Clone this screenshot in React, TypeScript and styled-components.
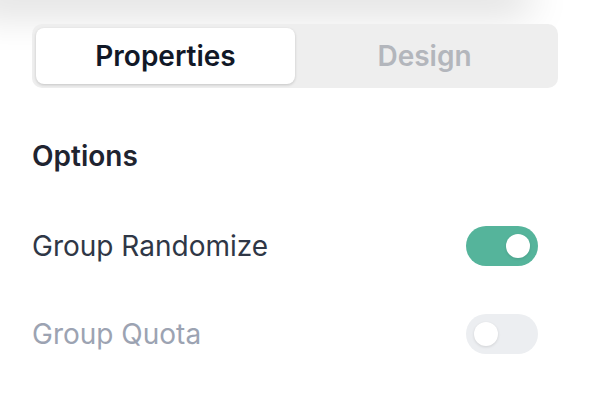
import { useState } from 'react'
import { styled, createGlobalStyle } from 'styled-components'

const GlobalStyle = createGlobalStyle`
	html, body {
		margin: 0;
		padding: 0;
		background: #ffffff;
		font-family: Inter, "Noto Sans", sans-serif;
		-webkit-font-smoothing: antialiased;
	}
`

const StyledPanel = styled.aside`
	width: 590px;
	height: 414px;
	overflow: hidden;
	background: #ffffff;
`
const StyledHeaderShade = styled.div`
	width: 560px;
	height: 30px;
	margin-top: -30px;
	margin-left: -30px;
	background: #ffffff;
	box-shadow: 0 12px 40px rgba(0, 0, 0, 0.16);
`
const StyledContent = styled.div`
	display: flex;
	flex-direction: column;
	padding: 24px 32px 0 32px;
`
const StyledTabs = styled.div`
	display: grid;
	grid-template-columns: 1fr 1fr;
	width: 526px;
	height: 64px;
	padding: 4px;
	box-sizing: border-box;
	background: #eeeeee;
	border-radius: 10px;
`
const StyledTab = styled.button<{ $active: boolean }>`
	border: none;
	border-radius: 8px;
	font-family: Inter, sans-serif;
	font-size: 28px;
	font-weight: 600;
	cursor: pointer;
	background: ${(p) => (p.$active ? '#ffffff' : 'transparent')};
	color: ${(p) => (p.$active ? '#111827' : '#b3b6bc')};
	box-shadow: ${(p) => (p.$active ? '0 1px 3px rgba(0, 0, 0, 0.18)' : 'none')};
`
const StyledHeading = styled.h3`
	margin: 48px 0 0 0;
	height: 40px;
	line-height: 40px;
	font-size: 28px;
	font-weight: 600;
	color: #1f2430;
`
const StyledRow = styled.label<{ $disabled?: boolean }>`
	display: flex;
	align-items: center;
	justify-content: space-between;
	width: 506px;
	height: 40px;
	margin-top: ${(p) => (p.$disabled ? '48px' : '50px')};
	font-size: 28px;
	font-weight: 400;
	color: ${(p) => (p.$disabled ? '#9ca3b2' : '#2f3746')};
`
const StyledTrack = styled.span<{ $on: boolean }>`
	display: flex;
	align-items: center;
	justify-content: ${(p) => (p.$on ? 'flex-end' : 'flex-start')};
	width: 72px;
	height: 40px;
	padding: 0 8px;
	box-sizing: border-box;
	border-radius: 20px;
	background: ${(p) => (p.$on ? '#55b49b' : '#eceef1')};
`
const StyledKnob = styled.span`
	width: 24px;
	height: 24px;
	border-radius: 50%;
	background: #ffffff;
	box-shadow: 0 1px 3px rgba(0, 0, 0, 0.12);
`

function Toggle({ on }: { on: boolean }) {
	return (
		<StyledTrack $on={on}>
			<StyledKnob />
		</StyledTrack>
	)
}

export default function App() {
	const [tab, setTab] = useState<'properties' | 'design'>('properties')

	return (
		<StyledPanel>
			<GlobalStyle />
			<StyledHeaderShade />
			<StyledContent>
				<StyledTabs>
					<StyledTab $active={tab === 'properties'} onClick={() => setTab('properties')}>
						Properties
					</StyledTab>
					<StyledTab $active={tab === 'design'} onClick={() => setTab('design')}>
						Design
					</StyledTab>
				</StyledTabs>

				<StyledHeading>Options</StyledHeading>

				<StyledRow>
					Group Randomize
					<Toggle on />
				</StyledRow>
				<StyledRow $disabled>
					Group Quota
					<Toggle on={false} />
				</StyledRow>
			</StyledContent>
		</StyledPanel>
	)
}
